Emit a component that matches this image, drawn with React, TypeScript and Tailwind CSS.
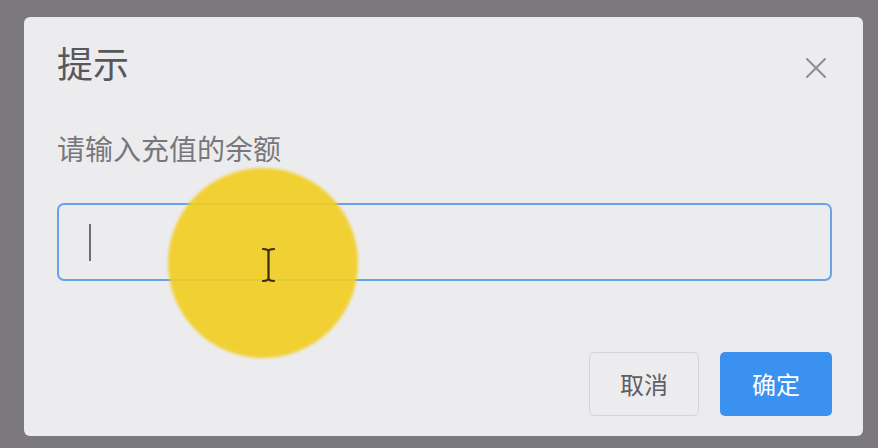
import React from "react";

export default function App() {
  const font = { fontFamily: '"Noto Sans CJK SC", "Noto Sans", sans-serif' };
  return (
    <div
      className="relative w-[878px] h-[448px] overflow-hidden bg-[#7b797c] pt-[17px] pl-[24px]"
      style={font}
    >
      <div className="w-[839px] h-[419px] rounded-[6px] bg-[#ececee] pt-[27px] pl-[33px] pr-[31px] pb-[20px] flex flex-col">
        <div className="h-[36px] flex items-start justify-between">
          <div className="text-[36px] leading-[36px] text-[#58575b]">提示</div>
          <svg
            className="mt-[13px] mr-[5px]"
            width="22"
            height="22"
            viewBox="0 0 22 22"
            fill="none"
            stroke="#8e8d91"
            strokeWidth="2"
            strokeLinecap="round"
          >
            <path d="M2 2 L20 20 M20 2 L2 20" />
          </svg>
        </div>
        <div className="mt-[54px] text-[28px] leading-[28px] text-[#78777b]">
          请输入充值的余额
        </div>
        <div className="mt-[41px] h-[78px] rounded-[7px] border-2 border-[#68a2ea] bg-[#ececee] flex items-center pl-[30px]">
          <div className="w-[2px] h-[37px] bg-[#6e6d70]" />
        </div>
        <div className="mt-[71px] flex justify-end gap-[21px]">
          <button className="w-[110px] h-[64px] rounded-[5px] border border-[#d5d4d8] bg-[#ececee] text-[24px] text-[#5f5e62]">
            取消
          </button>
          <button className="w-[112px] h-[64px] rounded-[5px] bg-[#3b91ef] text-[24px] text-white">
            确定
          </button>
        </div>
      </div>

      <div className="absolute left-[168px] top-[168px] w-[190px] h-[190px] rounded-full bg-[rgba(242,205,31,0.9)] blur-[1.5px]" />
      <svg
        className="absolute left-[261px] top-[247px]"
        width="15"
        height="36"
        viewBox="0 0 15 36"
        fill="none"
        stroke="#3a2c12"
        strokeWidth="2.2"
        strokeLinecap="round"
      >
        <path d="M2 2 Q7.5 2 7.5 5 L7.5 31 Q7.5 34 2 34 M13 2 Q7.5 2 7.5 5 M7.5 31 Q7.5 34 13 34" />
      </svg>
    </div>
  );
}
